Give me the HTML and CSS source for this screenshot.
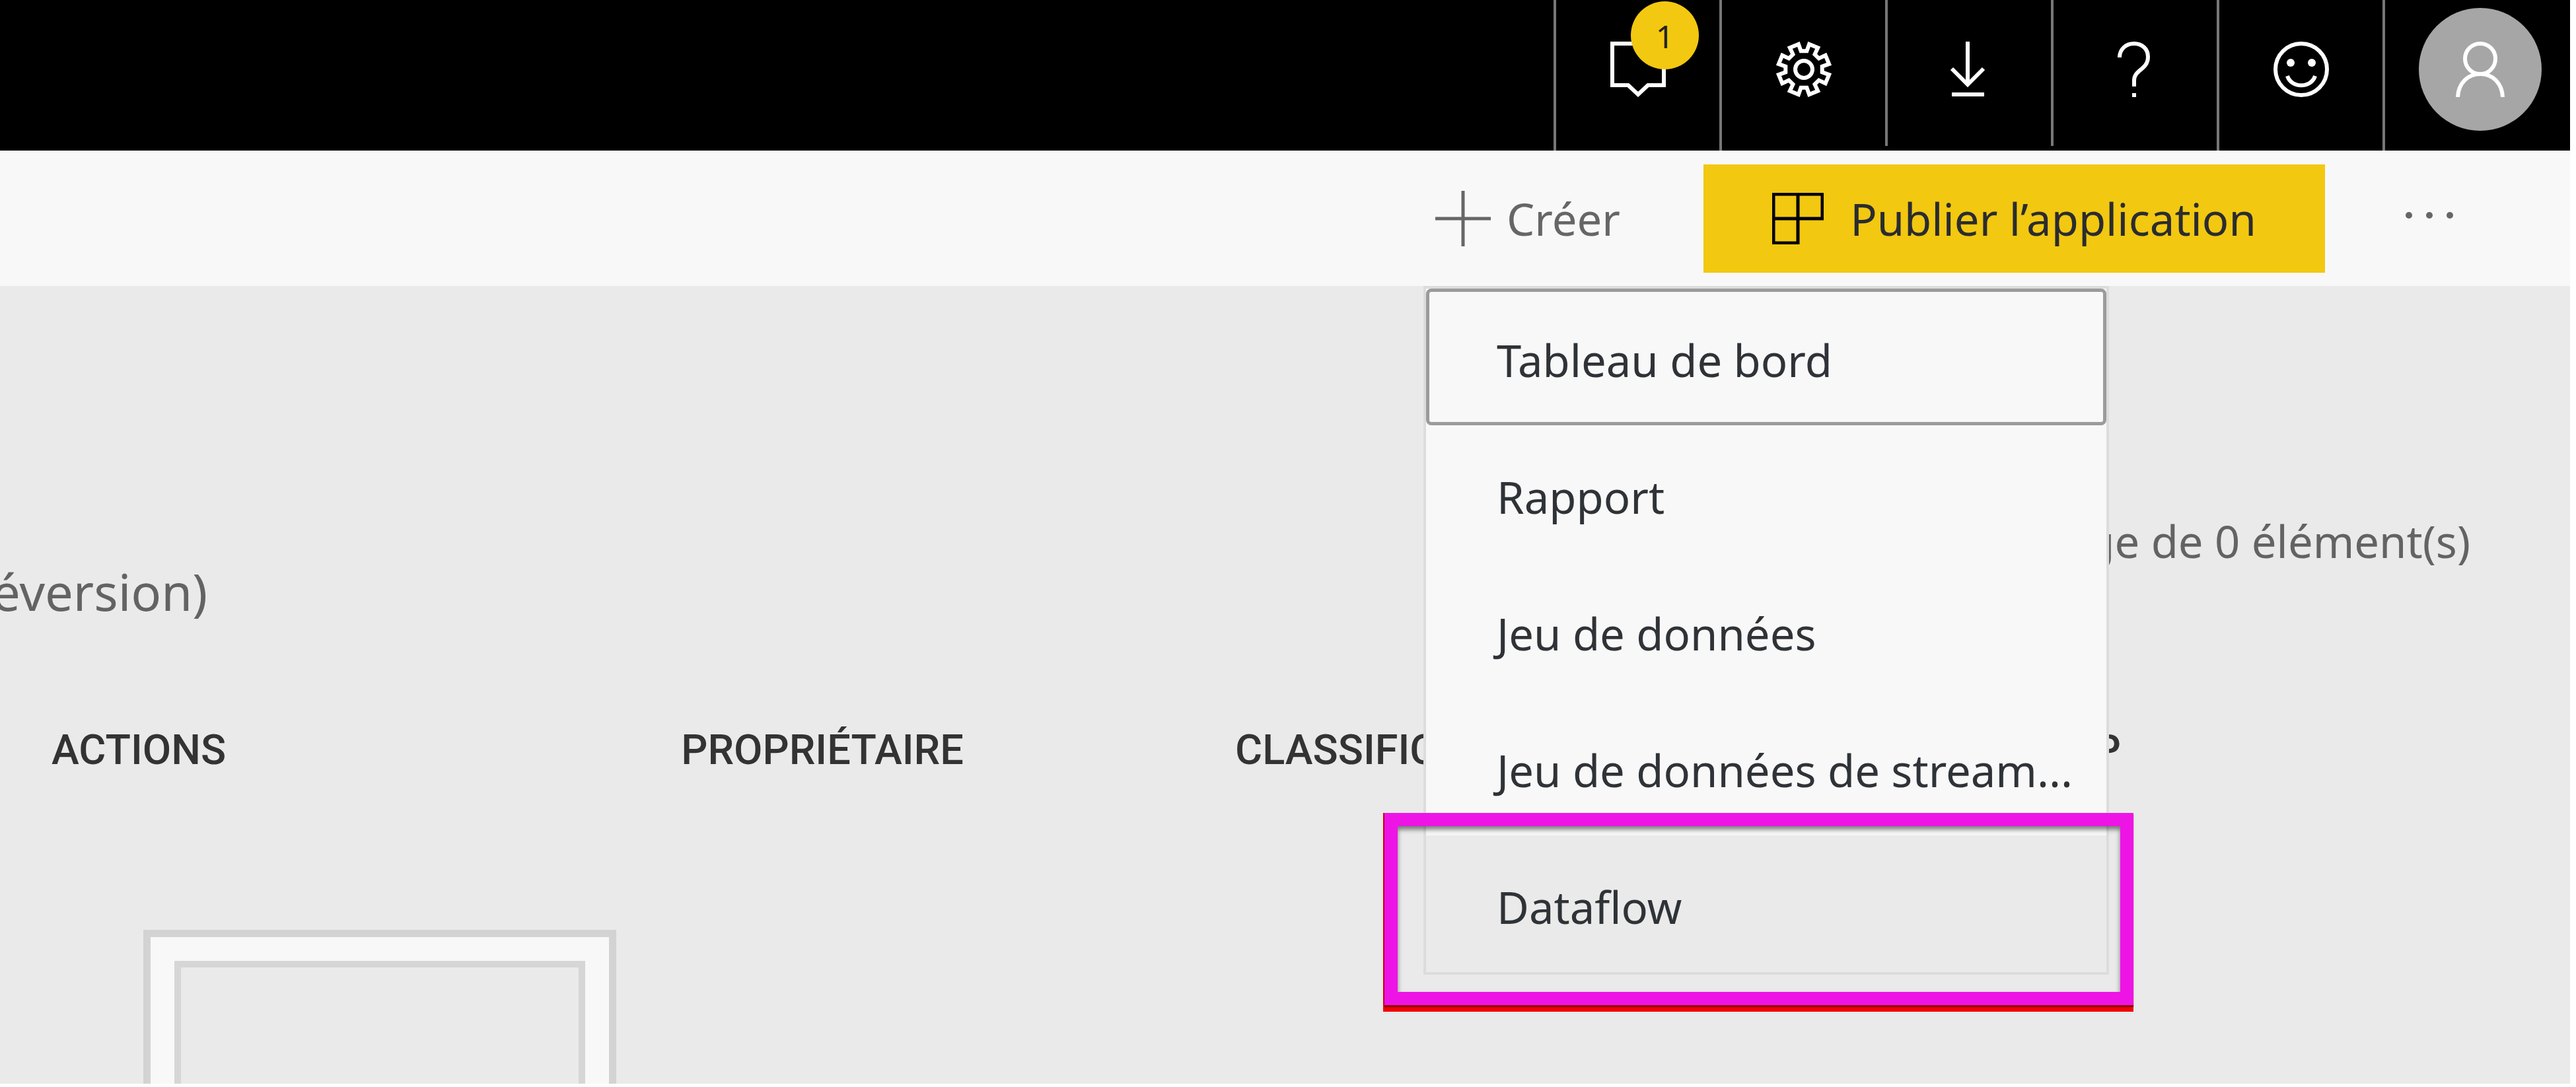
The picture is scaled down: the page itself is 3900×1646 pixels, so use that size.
FILE: index.html
```html
<!DOCTYPE html>
<html lang="fr">
<head>
<meta charset="utf-8">
<title>Espace de travail</title>
<link rel="stylesheet" href="styles.css">
</head>
<body>
<div class="app">
  <header class="topbar">
    <button class="tool" type="button" aria-label="Notifications">
      <svg class="icon" viewBox="0 0 84 84"><path d="M3 3H81V66H57L42 80L27 66H3Z"/></svg>
      <span class="badge">1</span>
    </button>
    <button class="tool" type="button" aria-label="Paramètres">
      <svg class="icon" viewBox="0 0 84 84"><path d="M33.9 3.9L37.6 14.3H46.4L50.1 3.9L63.2 9.3L58.5 19.3L64.7 25.5L74.7 20.8L80.1 33.9L69.7 37.6V46.4L80.1 50.1L74.7 63.2L64.7 58.5L58.5 64.7L63.2 74.7L50.1 80.1L46.4 69.7H37.6L33.9 80.1L20.8 74.7L25.5 64.7L19.3 58.5L9.3 63.2L3.9 50.1L14.3 46.4V37.6L3.9 33.9L9.3 20.8L19.3 25.5L25.5 19.3L20.8 9.3Z"/><circle cx="42" cy="42" r="13"/></svg>
    </button>
    <button class="tool tool-short" type="button" aria-label="Télécharger">
      <svg class="icon" viewBox="0 0 84 84"><path d="M39 0V65M15 41L39 65L63 41M15 80H64"/></svg>
    </button>
    <button class="tool tool-short" type="button" aria-label="Aide">
      <svg class="icon" viewBox="0 0 84 84"><path d="M18 24C18 11 28 3 40 3C52 3 61 11 61 23C61 43 40 42 40 59V68M40 78V84"/></svg>
    </button>
    <button class="tool" type="button" aria-label="Commentaires">
      <svg class="icon" viewBox="0 0 84 84"><circle cx="42" cy="42" r="39"/><path d="M21 52C27 71 57 71 63 52"/><circle class="dot" cx="26" cy="32" r="6"/><circle class="dot" cx="58" cy="32" r="6"/></svg>
    </button>
    <button class="tool tool-profile" type="button" aria-label="Profil">
      <span class="avatar"><svg class="icon" viewBox="0 0 84 84"><circle cx="42" cy="26" r="23"/><path d="M8 84C9 63 23 49 42 49C61 49 75 63 76 84"/></svg></span>
    </button>
  </header>

  <div class="actionbar">
    <div class="create">
      <button class="create-button" type="button" aria-haspopup="true" aria-expanded="true">
        <svg class="plus" viewBox="0 0 84 84"><path d="M42 0V84M0 42H84"/></svg>
        <span>Créer</span>
      </button>
      <ul class="menu">
        <li><button class="menu-item menu-item-focus" type="button">Tableau de bord</button></li>
        <li><button class="menu-item" type="button">Rapport</button></li>
        <li><button class="menu-item" type="button">Jeu de données</button></li>
        <li><button class="menu-item" type="button">Jeu de données de stream...</button></li>
        <li class="marked"><button class="menu-item menu-item-hover" type="button">Dataflow</button><span class="marker"></span></li>
      </ul>
    </div>
    <button class="publish" type="button">
      <svg class="tiles" viewBox="0 0 78 78"><path d="M2 2H76V39H2ZM39 2V76H2V2"/></svg>
      <span>Publier l’application</span>
    </button>
    <button class="more" type="button" aria-label="Plus">
      <svg class="dots" viewBox="0 0 80 20"><circle cx="9" cy="10" r="5"/><circle cx="40" cy="10" r="5"/><circle cx="71" cy="10" r="5"/></svg>
    </button>
  </div>

  <main class="content">
    <div class="summary">
      <a class="tab" href="#dataflows">Dataflows (préversion)</a>
      <p class="status">Affichage de 0 élément(s)</p>
    </div>
    <table class="list">
      <thead>
        <tr>
          <th class="col-actions" scope="col">ACTIONS</th>
          <th class="col-owner" scope="col">PROPRIÉTAIRE</th>
          <th class="col-class" scope="col">CLASSIFICATION</th>
          <th scope="col">INCLUS DANS L’APP</th>
        </tr>
      </thead>
    </table>
    <div class="frame"><div class="frame-inner"></div></div>
  </main>
</div>
</body>
</html>
```
FILE: styles.css
```css
* { box-sizing: border-box; }

body {
  margin: 0;
  min-height: 100vh;
  display: flex;
  padding: 0 9px 5px 0;
  background: #fff;
  font-family: "Noto Sans", "Open Sans", sans-serif;
  font-size: 67px;
  color: #2f3337;
}

button {
  margin: 0;
  padding: 0;
  border: 0;
  background: none;
  font: inherit;
  color: inherit;
}

.app {
  flex: 1;
  min-width: 0;
  display: flex;
  flex-direction: column;
  background: #eaeaea;
}

/* Top bar */
.topbar {
  display: flex;
  justify-content: flex-end;
  align-items: flex-start;
  height: 228px;
  background: #000;
}

.tool {
  position: relative;
  display: flex;
  justify-content: center;
  align-items: flex-start;
  width: 251px;
  height: 228px;
  padding-top: 63px;
  border-left: 4px solid #777;
}

.tool-short { height: 221px; }

.tool-profile {
  width: 284px;
  padding-top: 12px;
  padding-left: 8px;
}

.icon {
  width: 84px;
  height: 84px;
  fill: none;
  stroke: #fff;
  stroke-width: 6px;
}

.icon .dot { fill: #fff; stroke: none; }

.badge {
  position: absolute;
  top: 2px;
  left: 113px;
  width: 103px;
  height: 103px;
  border-radius: 50%;
  background: #f2c811;
  color: #222;
  font-size: 48px;
  line-height: 106px;
  text-align: center;
}

.avatar {
  display: flex;
  justify-content: center;
  align-items: center;
  width: 186px;
  height: 186px;
  border-radius: 50%;
  background: #a6a6a6;
}

/* Action bar */
.actionbar {
  display: flex;
  justify-content: flex-end;
  align-items: center;
  height: 205px;
  padding-right: 173px;
  background: #f8f8f8;
}

.create {
  position: relative;
  align-self: stretch;
  display: flex;
  width: 424px;
}

.create-button {
  display: flex;
  align-items: center;
  gap: 24px;
  padding-left: 18px;
  color: #666;
}

.plus {
  width: 84px;
  height: 84px;
  fill: none;
  stroke: #666;
  stroke-width: 5px;
}

.publish {
  display: flex;
  justify-content: center;
  align-items: center;
  gap: 40px;
  width: 941px;
  height: 164px;
  background: #f2c811;
  color: #2a2c30;
}

.tiles {
  width: 78px;
  height: 78px;
  fill: none;
  stroke: #000;
  stroke-width: 5px;
}

.more {
  display: flex;
  margin-left: 118px;
  padding-bottom: 10px;
}

.dots {
  width: 80px;
  height: 20px;
  fill: #666;
}

/* Create menu */
.menu {
  position: absolute;
  z-index: 1;
  top: 100%;
  left: 0;
  width: 1038px;
  margin: 0;
  padding: 0;
  border: 4px solid #dcdcdc;
  background: #f8f8f8;
  list-style: none;
}

.menu-item {
  display: flex;
  align-items: center;
  width: 100%;
  height: 207px;
  padding: 8px 0 0 102px;
  border: 5px solid transparent;
  white-space: nowrap;
}

.menu-item-focus {
  border-color: #9b9b9b;
  border-radius: 8px;
}

.menu-item-hover { background: #eaeaea; }

.marked { position: relative; }

.marker {
  position: absolute;
  top: -34px;
  right: -41px;
  bottom: -50px;
  left: -63px;
  border: 20px solid #ee14e6;
  box-shadow: inset 0 5px 7px rgba(0, 0, 0, 0.5), 0 3px 1px #900000, -2px 0 0 #d00000, 0 10px 0 #f00000, -2px 10px 0 #f00000;
}

/* Content */
.content {
  flex: 1;
  display: flex;
  flex-direction: column;
  padding-top: 341px;
}

.summary {
  display: flex;
  justify-content: space-between;
  align-items: flex-start;
  padding-right: 151px;
  color: #636363;
}

.tab {
  display: flex;
  justify-content: flex-end;
  width: 314px;
  margin-top: 72px;
  overflow: hidden;
  color: inherit;
  font-size: 76px;
  line-height: 100px;
  text-decoration: none;
  white-space: nowrap;
}

.status {
  margin: 0;
  line-height: 90px;
}

.list {
  margin: 150px 0 0 78px;
  table-layout: fixed;
  border-collapse: collapse;
}

.list th {
  padding: 0;
  color: #333;
  font-family: Roboto, sans-serif;
  font-size: 63px;
  font-weight: 500;
  line-height: 80px;
  text-align: left;
  white-space: nowrap;
}

.col-actions { width: 25%; }
.col-owner { width: 22%; }
.col-class { width: 20%; }

.frame {
  flex: 1;
  display: flex;
  width: 716px;
  min-height: 233px;
  margin: 232px 0 0 217px;
  padding: 36px 36px 0;
  border: 11px solid #d3d3d3;
  border-bottom: 0;
  background: #f8f8f8;
}

.frame-inner {
  flex: 1;
  border: 10px solid #d6d6d6;
  border-bottom: 0;
  background: #eaeaea;
}
```
